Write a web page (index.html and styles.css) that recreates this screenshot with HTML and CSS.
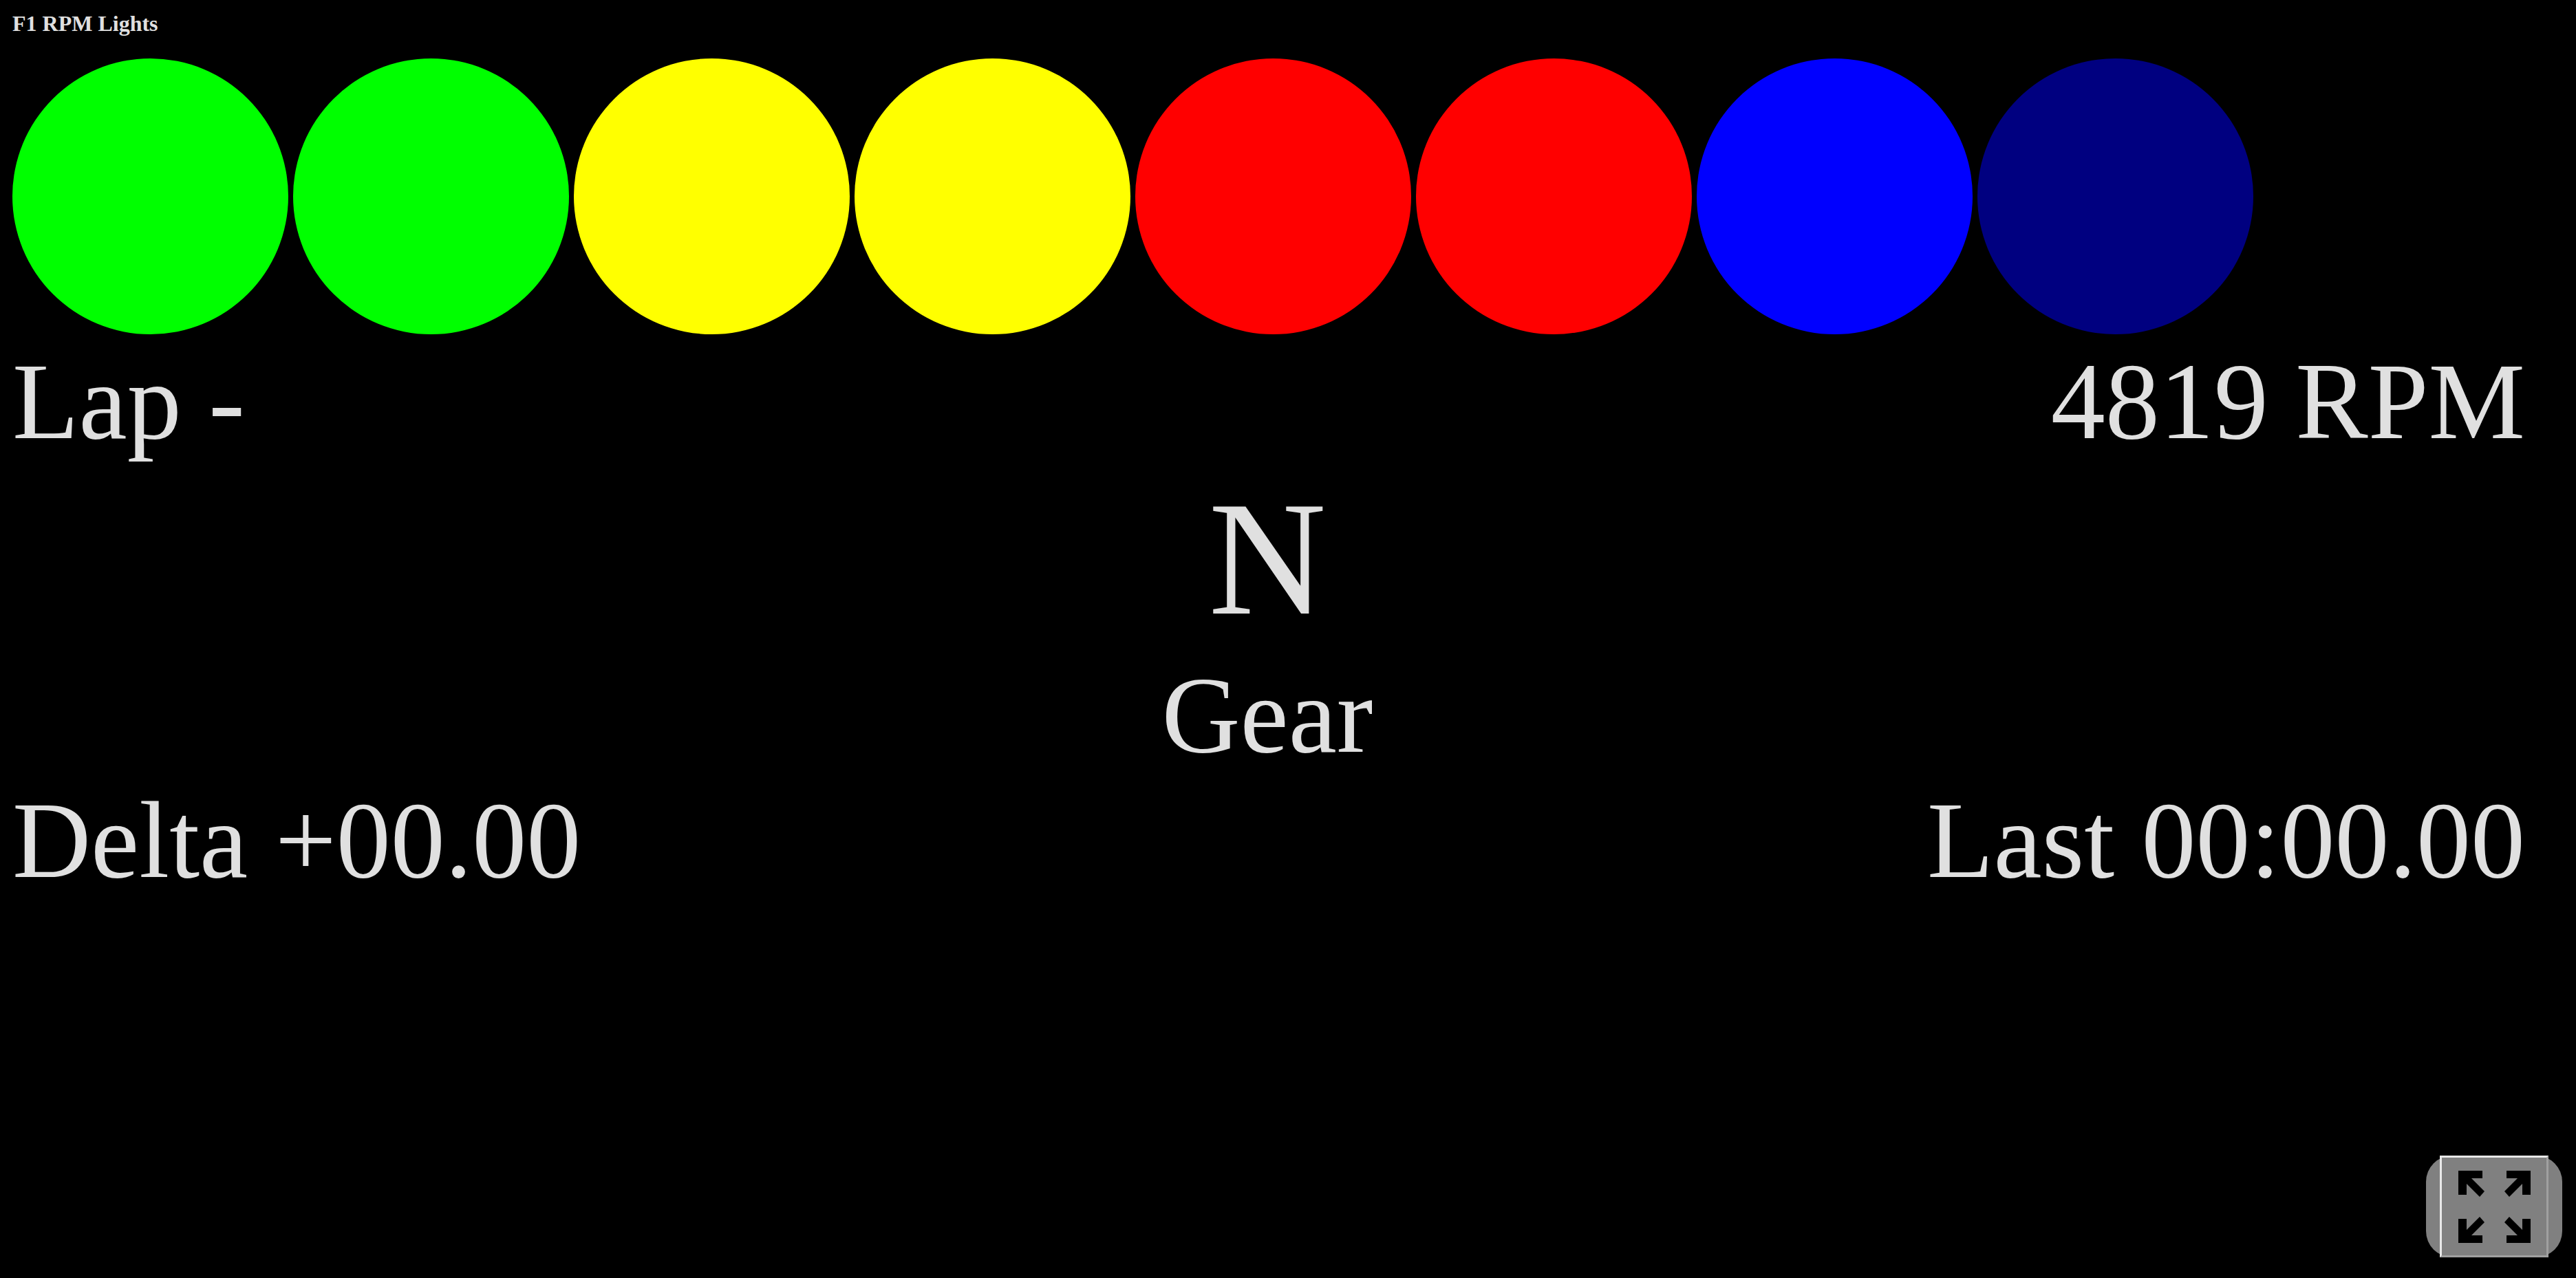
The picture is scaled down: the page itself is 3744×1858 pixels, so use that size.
FILE: index.html
```html
<!DOCTYPE html>
<html lang="en">
<head>
    <meta charset="UTF-8">
    <meta name="viewport" content="width=device-width, initial-scale=1.0">
    <title>F1 RPM Lights</title>
    <link rel="stylesheet" href="styles.css">
</head>
<body>
    <div class="dash">
        <h1 class="title">F1 RPM Lights</h1>

        <div class="lights">
            <div class="light green"></div>
            <div class="light green"></div>
            <div class="light yellow"></div>
            <div class="light yellow"></div>
            <div class="light red"></div>
            <div class="light red"></div>
            <div class="light blue"></div>
            <div class="light navy"></div>
        </div>

        <div class="row">
            <span>Lap -</span>
            <span>4819 RPM</span>
        </div>

        <div class="gear">
            <div class="gear-value">N</div>
            <div class="gear-label">Gear</div>
        </div>

        <div class="row">
            <span>Delta +00.00</span>
            <span>Last 00:00.00</span>
        </div>
    </div>

    <div class="fullscreen">
        <button class="fullscreen-btn" aria-label="Fullscreen">
            <svg class="fullscreen-icon" viewBox="0 0 105 105">
                <path d="M0 0H35V11H19L38 30L31 38L12 19V35H0Z"/>
                <path d="M105 0H70V11H86L67 30L74 38L93 19V35H105Z"/>
                <path d="M0 105H35V94H19L38 75L31 67L12 86V70H0Z"/>
                <path d="M105 105H70V94H86L67 75L74 67L93 86V70H105Z"/>
            </svg>
        </button>
    </div>
</body>
</html>
```

FILE: styles.css
```css
/* General Reset */
* {
    margin: 0;
    padding: 0;
    box-sizing: border-box;
}

body {
    background: #000;
    color: #e0e0e0;
    font-family: "Liberation Serif", "Times New Roman", serif;
    height: 100vh;
    overflow: hidden;
}

.dash {
    width: 3670px;
    padding-left: 18px;
}

.title {
    font-size: 32px;
    font-weight: bold;
    line-height: 37px;
    padding-top: 16px;
    margin-bottom: 32px;
}

.lights {
    display: flex;
    gap: 7px;
    margin-bottom: 7px;
}

.light {
    width: 401px;
    height: 401px;
    border-radius: 50%;
}

.green { background: #0f0; }
.yellow { background: #ff0; }
.red { background: #f00; }
.blue { background: #00f; }
.navy { background: #000080; }

.row {
    display: flex;
    justify-content: space-between;
    font-size: 158px;
    line-height: 182px;
}

.gear {
    text-align: center;
    padding-right: 4px;
}

.gear-value {
    font-size: 237px;
    line-height: 274px;
}

.gear-label {
    font-size: 158px;
    line-height: 182px;
}

.fullscreen {
    position: absolute;
    right: 20px;
    bottom: 30px;
    width: 198px;
    height: 148px;
    background: #808080;
    border-radius: 38px;
    display: flex;
    justify-content: center;
}

.fullscreen-btn {
    width: 158px;
    height: 148px;
    background: #808080;
    border: 3px solid;
    border-color: #e8e8e8 #a0a0a0 #a0a0a0 #e8e8e8;
    display: flex;
    align-items: center;
    justify-content: center;
}

.fullscreen-icon {
    width: 105px;
    height: 105px;
    fill: #000;
}
```
